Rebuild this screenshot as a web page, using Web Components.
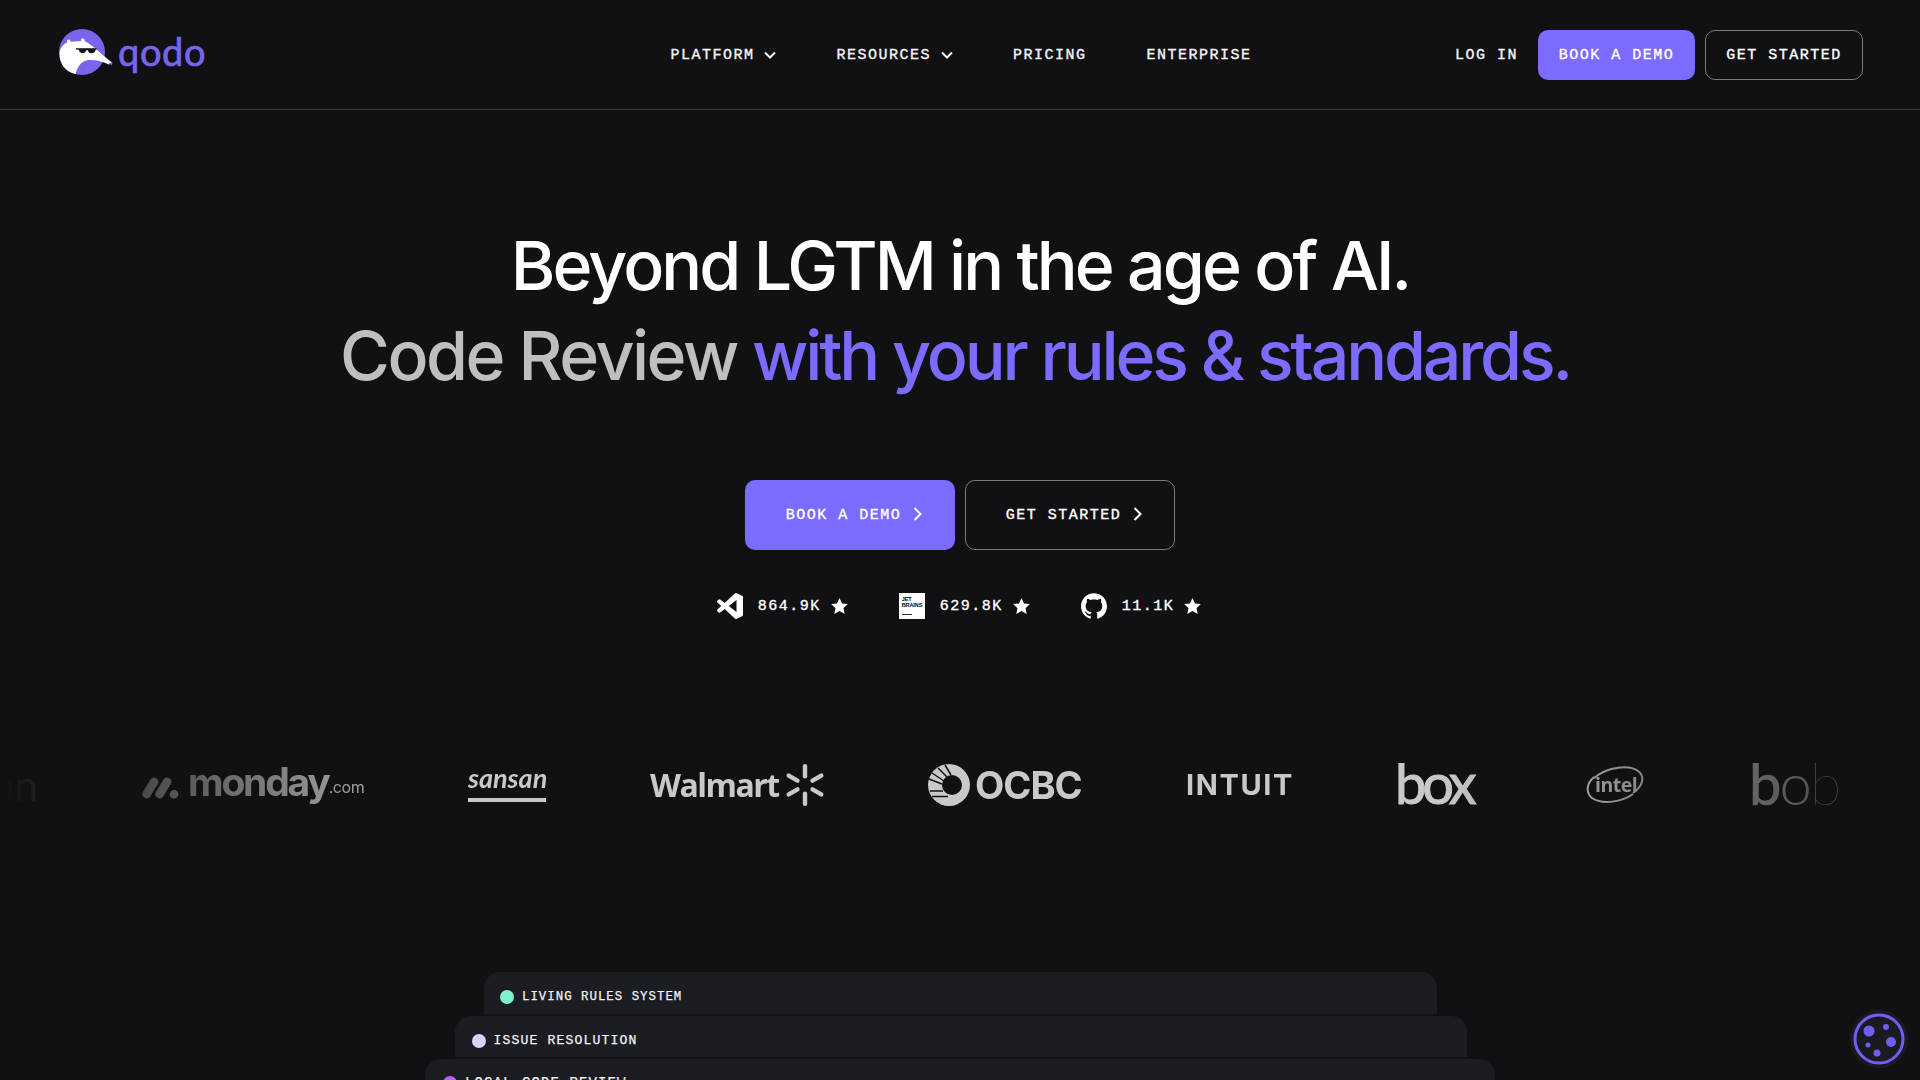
<!DOCTYPE html>
<html lang="en">
<head>
<meta charset="utf-8">
<title>Qodo</title>
<style>
  html, body { margin: 0; height: 1080px; overflow: hidden; background: #111114; }
  body { font-family: "Liberation Mono", monospace; color: #fff; }
</style>
</head>
<body>
<site-header></site-header>
<hero-section></hero-section>
<logo-strip></logo-strip>
<feature-stack></feature-stack>
<cookie-badge></cookie-badge>

<script>
const MONO = `"Liberation Mono", monospace`;
const MONO_TEXT = `font: 400 15px/20px ${MONO}; letter-spacing: 1.5px; -webkit-text-stroke: .35px currentColor;`;
const CHEVRON_RIGHT = `<svg style="margin-top:-3px" width="9" height="14" viewBox="0 0 9 14" fill="none" stroke="currentColor" stroke-width="2"><path d="M1.500 1l6 6-6 6"/></svg>`;

class NavLink extends HTMLElement {
  constructor() {
    super();
    this.attachShadow({ mode: 'open' });
    const chevron = this.hasAttribute('menu')
      ? `<svg width="12" height="8" viewBox="0 0 12 8" fill="none" stroke="currentColor" stroke-width="2"><path d="M1 1.500l5 5 5-5"/></svg>`
      : '';
    this.shadowRoot.innerHTML = `
      <style>
        :host { display: inline-flex; align-items: center; gap: 10px; color: #f4f4f6; ${MONO_TEXT} }
        .label { margin-top: 2px; }
      </style>
      <span class="label"><slot></slot></span>${chevron}`;
  }
}

class CtaButton extends HTMLElement {
  constructor() {
    super();
    this.attachShadow({ mode: 'open' });
    const arrow = this.hasAttribute('arrow') ? CHEVRON_RIGHT : '';
    this.shadowRoot.innerHTML = `
      <style>
        :host { display: inline-flex; align-items: center; justify-content: center; box-sizing: border-box; gap: 12px;
          width: 157px; height: 50px; border-radius: 10px; color: #fff; ${MONO_TEXT} }
        :host([primary]) { background: #7b6bff; }
        :host(:not([primary])) { border: 1px solid #7a7a80; width: 158px; }
        :host([large]) { width: 210px; height: 70px; padding-left: 8px; }
        .label { margin-top: 2px; }
      </style>
      <span class="label"><slot></slot></span>${arrow}`;
  }
}

class QodoLogo extends HTMLElement {
  constructor() {
    super();
    this.attachShadow({ mode: 'open' });
    this.shadowRoot.innerHTML = `
      <style>
        :host { display: inline-flex; align-items: center; gap: 5px; margin-left: 2px; }
        svg { display: block; }
        span { font: 400 38px/46px Lato, sans-serif; color: #7766ec; letter-spacing: .6px; margin-top: -3px; -webkit-text-stroke: .7px #7766ec; }
      </style>
      <svg width="54" height="46" viewBox="0 0 54 46">
        <circle cx="23" cy="23" r="23" fill="#7766ec"/>
        <path fill="#fff" d="M.6 24C1 19 4 15.500 8 13.500L8 11 10.500 10.500 12 12.800 22 12 22.300 9.500 25 9.500 26 12.500C33 15.500 41 24 53 33.500L50 35.500C44 32.500 36 30.500 29.500 31 23 31.500 19 36.500 16.500 45 7 43 0 35 .6 24Z"/>
        <path fill="#7766ec" d="M49.500 34.500l4-1.500-.5 3z"/>
        <path fill="#111114" d="M17 19.200h20.500v1.400l-1 .2c-.3 3-2.500 3.600-4.500 3.400-1.700-.2-3-1.500-3-3h-1.800c-.3 2-2 3-4 2.800-2-.2-3.200-1.500-3.400-3.300l-2.800-.1z"/>
      </svg>
      <span>qodo</span>`;
  }
}

class SiteHeader extends HTMLElement {
  constructor() {
    super();
    this.attachShadow({ mode: 'open' });
    this.shadowRoot.innerHTML = `
      <style>
        :host { display: grid; grid-template-columns: 1fr auto 1fr; align-items: center; box-sizing: border-box;
          height: 110px; padding: 0 57px; border-bottom: 1px solid #3b3b40; }
        nav { display: flex; align-items: center; gap: 60px; margin-left: 2px; }
        .actions { display: flex; align-items: center; justify-content: flex-end; }
        .login { margin-right: 20px; margin-top: 1px; }
        .book { margin-right: 10px; }
      </style>
      <div><qodo-logo></qodo-logo></div>
      <nav>
        <nav-link menu>PLATFORM</nav-link>
        <nav-link menu>RESOURCES</nav-link>
        <nav-link>PRICING</nav-link>
        <nav-link>ENTERPRISE</nav-link>
      </nav>
      <div class="actions">
        <nav-link class="login">LOG IN</nav-link>
        <cta-button class="book" primary>BOOK A DEMO</cta-button>
        <cta-button>GET STARTED</cta-button>
      </div>`;
  }
}

class StatItem extends HTMLElement {
  constructor() {
    super();
    this.attachShadow({ mode: 'open' });
    this.shadowRoot.innerHTML = `
      <style>
        :host { display: inline-flex; align-items: center; color: #fff; ${MONO_TEXT} line-height: 26px; }
        .value { margin: 2px 10px 0 15px; }
        svg { display: block; }
      </style>
      <slot name="icon"></slot>
      <span class="value"><slot></slot></span>
      <svg width="17" height="16" viewBox="0 0 24 23" fill="#fff"><path d="M12 0l3.600 7.900 8.400.9-6.200 5.800 1.700 8.400L12 18.800 4.500 23l1.700-8.400L0 8.800l8.400-.9z"/></svg>`;
  }
}

class HeroSection extends HTMLElement {
  constructor() {
    super();
    this.attachShadow({ mode: 'open' });
    this.shadowRoot.innerHTML = `
      <style>
        :host { display: flex; flex-direction: column; align-items: center; padding-top: 110px; }
        h1 { margin: 0; text-align: center; font: 500 68px/90px Inter, sans-serif; letter-spacing: -2.900px; color: #fff; }
        h1 span { display: block; }
        h1 .second { margin-right: 10px; }
        h1 .second span { display: inline; }
        h1 .muted { color: #bfbfc2; letter-spacing: -2.500px; }
        h1 .accent { color: #7b6bff; letter-spacing: -3.150px; }
        .buttons { display: flex; gap: 10px; margin-top: 80px; }
        .stats { display: flex; gap: 51px; margin: 42px 2px 0 0; }
        .jb { display: flex; flex-direction: column; box-sizing: border-box; width: 26px; height: 26px; padding: 3px; background: #fff; color: #000;
          font: 700 5.500px/6px "Liberation Sans", sans-serif; letter-spacing: -.1px; -webkit-text-stroke: 0; white-space: nowrap; }
        .jb i { display: block; width: 10px; height: 1.500px; background: #333; margin-top: auto; margin-bottom: 1px; }
      </style>
      <h1><span>Beyond LGTM in the age of AI.</span><span class="second"><span class="muted">Code Review</span> <span class="accent">with your rules &amp; standards.</span></span></h1>
      <div class="buttons">
        <cta-button primary large arrow>BOOK A DEMO</cta-button>
        <cta-button large arrow>GET STARTED</cta-button>
      </div>
      <div class="stats">
        <stat-item>
          <svg slot="icon" width="26" height="26" viewBox="0 0 24 24" fill="#fff" style="display:block"><path d="M23.150 2.587L18.210.21a1.494 1.494 0 0 0-1.705.29l-9.460 8.630-4.120-3.128a.999.999 0 0 0-1.276.057L.327 7.261A1 1 0 0 0 .326 8.740L3.899 12 .326 15.260a1 1 0 0 0 .001 1.479L1.650 17.940a.999.999 0 0 0 1.276.057l4.120-3.128 9.460 8.630a1.492 1.492 0 0 0 1.704.29l4.942-2.377A1.500 1.500 0 0 0 24 20.060V3.939a1.500 1.500 0 0 0-.850-1.352zm-5.146 14.861L10.826 12l7.178-5.448v10.896z"/></svg>
          864.9K
        </stat-item>
        <stat-item>
          <div slot="icon" class="jb">JET<br>BRAINS<i></i></div>
          629.8K
        </stat-item>
        <stat-item>
          <svg slot="icon" width="26" height="26" viewBox="0 0 24 24" fill="#fff" style="display:block"><path d="M12 .297c-6.630 0-12 5.373-12 12 0 5.303 3.438 9.800 8.205 11.385.6.113.82-.258.82-.577 0-.285-.01-1.040-.015-2.040-3.338.724-4.042-1.610-4.042-1.610C4.422 18.070 3.633 17.700 3.633 17.700c-1.087-.744.084-.729.084-.729 1.205.084 1.838 1.236 1.838 1.236 1.070 1.835 2.809 1.305 3.495.998.108-.776.417-1.305.76-1.605-2.665-.3-5.466-1.332-5.466-5.930 0-1.310.465-2.380 1.235-3.220-.135-.303-.54-1.523.105-3.176 0 0 1.005-.322 3.300 1.230.96-.267 1.980-.399 3-.405 1.020.006 2.040.138 3 .405 2.280-1.552 3.270-1.230 3.270-1.230.645 1.653.24 2.873.12 3.176.765.84 1.230 1.910 1.230 3.220 0 4.610-2.805 5.625-5.475 5.920.42.36.81 1.096.81 2.220 0 1.606-.015 2.896-.015 3.286 0 .315.21.69.825.57C20.565 22.092 24 17.592 24 12.297c0-6.627-5.373-12-12-12"/></svg>
          11.1K
        </stat-item>
      </div>`;
  }
}

class LogoStrip extends HTMLElement {
  constructor() {
    super();
    this.attachShadow({ mode: 'open' });
    this.shadowRoot.innerHTML = `
      <style>
        :host { display: block; margin-top: 143px; height: 44px; color: #c9c9cb;
          -webkit-mask-image: linear-gradient(90deg, transparent 0, #000 460px, #000 1440px, transparent 2020px);
          mask-image: linear-gradient(90deg, transparent 0, #000 460px, #000 1440px, transparent 2020px); }
        .track { display: flex; align-items: center; gap: 104px; height: 44px; margin-left: -22px; white-space: nowrap; }
        .logo { flex: none; display: flex; align-items: center; height: 44px; }
        svg { display: block; flex: none; }
        .tail { width: 60px; justify-content: flex-end; font: 400 42px Lato, sans-serif; }
        .monday { width: 222px; gap: 9px; margin-top: -7px; }
        .monday svg { margin-top: 12px; }
        .monday b { font: 700 39px/44px Inter, sans-serif; letter-spacing: -2.200px; }
        .monday span { font: 400 16px/44px Inter, sans-serif; margin: 10px 0 0 -9px; letter-spacing: -.4px; }
        .sansan { width: 78px; flex-direction: column; align-items: stretch; }
        .sansan b { font: italic 700 27px/27px Lato, sans-serif; text-align: center; margin-top: 1px; }
        .sansan i { display: block; height: 4px; background: currentColor; margin-top: 7px; }
        .walmart { width: 174px; gap: 6px; font: 700 32px/44px "Open Sans", sans-serif; letter-spacing: -1.500px; }
        .ocbc { width: 155px; gap: 5px; font: 700 38px/44px Inter, sans-serif; letter-spacing: -1px; }
        .intuit { width: 107px; font: 700 29px/44px Inter, sans-serif; letter-spacing: 1.600px; margin-left: -1px; margin-right: 1px; }
        .box { width: 84px; font: 400 56px/44px Lato, sans-serif; letter-spacing: -4px; -webkit-text-stroke: 1px currentColor; padding-bottom: 4px; box-sizing: border-box; height: 44px; margin-left: -3px; margin-right: 3px; }
        .intel { width: 62px; display: grid; align-items: center; }
        .intel > * { grid-area: 1 / 1; }
        .intel span { font: 700 19.500px/19px "Open Sans", sans-serif; margin-left: 9px; letter-spacing: -.5px; margin-top: -1px; }
        .bob { width: 87px; font: 400 58px/44px Lato, sans-serif; letter-spacing: -2px; padding-bottom: 4px; box-sizing: border-box; height: 44px; margin-left: -3px; margin-right: 3px; }
        .bob .b1 { -webkit-text-stroke: .6px currentColor; }
        .bob .o { font-weight: 300; }
        .bob .b2 { font-weight: 100; }
      </style>
      <div class="track">
        <div class="logo tail">an</div>
        <div class="logo monday">
          <svg width="37" height="22" viewBox="0 0 37 22" fill="currentColor">
            <path d="M4.500 21.500a4.200 4.200 0 0 1-3.600-6.400L8.500 2.500a4.300 4.300 0 0 1 7.300 4.500L8.200 19.500a4.300 4.300 0 0 1-3.700 2z"/>
            <path d="M17.500 21.500a4.200 4.200 0 0 1-3.600-6.400L21.500 2.500a4.300 4.300 0 0 1 7.300 4.500L21.200 19.500a4.300 4.300 0 0 1-3.700 2z"/>
            <circle cx="32" cy="17.200" r="4.300"/>
          </svg>
          <b>monday</b><span>.com</span>
        </div>
        <div class="logo sansan"><b>sansan</b><i></i></div>
        <div class="logo walmart">Walmart
          <svg width="40" height="42" viewBox="-20 -21 40 42" fill="currentColor">
            <rect x="-2.200" y="-21" width="4.400" height="14.500" rx="2.200"/>
            <rect x="-2.200" y="-21" width="4.400" height="14.500" rx="2.200" transform="rotate(60)"/>
            <rect x="-2.200" y="-21" width="4.400" height="14.500" rx="2.200" transform="rotate(120)"/>
            <rect x="-2.200" y="-21" width="4.400" height="14.500" rx="2.200" transform="rotate(180)"/>
            <rect x="-2.200" y="-21" width="4.400" height="14.500" rx="2.200" transform="rotate(240)"/>
            <rect x="-2.200" y="-21" width="4.400" height="14.500" rx="2.200" transform="rotate(300)"/>
          </svg>
        </div>
        <div class="logo ocbc">
          <svg width="42" height="42" viewBox="0 0 42 42">
            <circle cx="21" cy="21" r="21" fill="currentColor"/>
            <circle cx="24" cy="21" r="10" fill="#111114"/>
            <path fill="none" stroke="#111114" stroke-width="1.500" d="M1 15L14 20M4 9L16 17M10 4L19 13M17 1L23 11M2 27H15M4 32.500H20"/>
          </svg>
          <span>OCBC</span>
        </div>
        <div class="logo intuit">INTUIT</div>
        <div class="logo box">box</div>
        <div class="logo intel">
          <svg width="58" height="38" viewBox="0 0 58 38" fill="none" stroke="currentColor" stroke-width="2">
            <path d="M8 11C1 17-1 26 6 32c10 7 30 4 41-4"/>
            <path d="M47 27C56 21 60 11 52 5 44-1 22 0 8 12"/>
          </svg>
          <span>intel</span>
        </div>
        <div class="logo bob"><span class="b1">b</span><span class="o">o</span><span class="b2">b</span></div>
      </div>`;
  }
}

class StackCard extends HTMLElement {
  constructor() {
    super();
    this.attachShadow({ mode: 'open' });
    this.shadowRoot.innerHTML = `
      <style>
        :host { display: flex; align-items: center; box-sizing: border-box; height: 42px; padding-top: 7px;
          background: #1c1d22; border-radius: 16px 16px 0 0; color: #f2f2f4;
          font-family: ${MONO}; line-height: 16px; -webkit-text-stroke: .25px currentColor; }
        i { width: 14px; height: 14px; border-radius: 50%; background: var(--dot); flex: none; margin-right: 8px; }
      </style>
      <i></i><slot></slot>`;
  }
}

class FeatureStack extends HTMLElement {
  constructor() {
    super();
    this.attachShadow({ mode: 'open' });
    this.shadowRoot.innerHTML = `
      <style>
        :host { display: flex; flex-direction: column; align-items: center; gap: 2px; margin-top: 165px; }
        .living { width: 953px; margin-left: 1px; padding-left: 16px; font-size: 12.400px; letter-spacing: 1px; --dot: #7df3cf; }
        .issue { width: 1012px; margin-left: 1px; height: 41px; padding: 8px 0 0 17px; font-size: 13.100px; letter-spacing: 1.150px; --dot: #d8d2ff; }
        .local { width: 1070px; height: 48px; padding: 0 0 0 18px; font-size: 14px; letter-spacing: 1.100px; --dot: #b565ea; }
      </style>
      <stack-card class="living">LIVING RULES SYSTEM</stack-card>
      <stack-card class="issue">ISSUE RESOLUTION</stack-card>
      <stack-card class="local">LOCAL CODE REVIEW</stack-card>`;
  }
}

class CookieBadge extends HTMLElement {
  constructor() {
    super();
    this.attachShadow({ mode: 'open' });
    this.shadowRoot.innerHTML = `
      <style>
        :host { position: fixed; left: 1850px; top: 1010px; width: 58px; height: 58px; border-radius: 50%; background: #1a1a20; display: block; }
        svg { display: block; }
      </style>
      <svg width="58" height="58" viewBox="0 0 58 58" fill="#6d5ff0">
        <circle cx="29" cy="29" r="24" fill="none" stroke="#6d5ff0" stroke-width="3"/>
        <circle cx="19" cy="21" r="5.500"/>
        <circle cx="36" cy="17" r="3"/>
        <circle cx="41" cy="32" r="5"/>
        <circle cx="18" cy="35" r="2.500"/>
        <circle cx="27" cy="43" r="3.500"/>
      </svg>`;
  }
}

customElements.define('nav-link', NavLink);
customElements.define('cta-button', CtaButton);
customElements.define('qodo-logo', QodoLogo);
customElements.define('site-header', SiteHeader);
customElements.define('stat-item', StatItem);
customElements.define('hero-section', HeroSection);
customElements.define('logo-strip', LogoStrip);
customElements.define('stack-card', StackCard);
customElements.define('feature-stack', FeatureStack);
customElements.define('cookie-badge', CookieBadge);
</script>
</body>
</html>
